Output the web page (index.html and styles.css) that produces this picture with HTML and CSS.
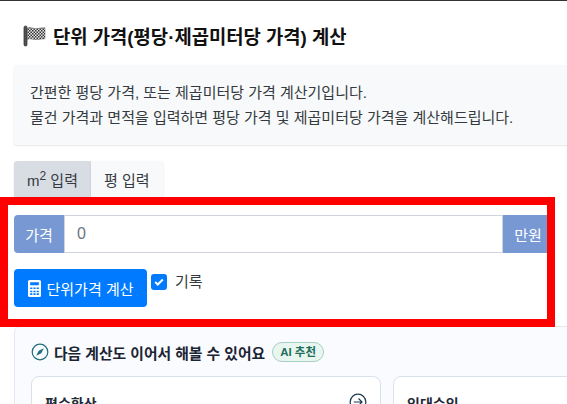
FILE: index.html
```html
<!DOCTYPE html>
<html lang="ko">
<head>
  <meta charset="UTF-8" />
  <title>단위 가격 계산</title>
  <link rel="stylesheet" href="styles.css">
</head>
<body>
  <div class="page">
    <h1 class="title">
      <svg class="flag" width="23" height="24" viewBox="0 0 23 24">
        <defs>
          <pattern id="check" width="3" height="3" patternUnits="userSpaceOnUse">
            <rect width="3" height="3" fill="#e8e8e8"/>
            <rect width="1.5" height="1.5" fill="#333"/>
            <rect x="1.5" y="1.5" width="1.5" height="1.5" fill="#333"/>
          </pattern>
        </defs>
        <rect x="1" y="2" width="3" height="20" rx="1.5" fill="#555" stroke="#222" stroke-width=".7"/>
        <path d="M4 4c4-1.500 6 .8 9 .6 3-.2 5-.8 9-.8v11c-4 .2-6 .8-9 .8-3 .2-5-1.600-9-.2z" fill="url(#check)" stroke="#444" stroke-width=".4"/>
      </svg>
      단위 가격(평당·제곱미터당 가격) 계산
    </h1>

    <div class="info">
      간편한 평당 가격, 또는 제곱미터당 가격 계산기입니다.<br>
      물건 가격과 면적을 입력하면 평당 가격 및 제곱미터당 가격을 계산해드립니다.
    </div>

    <div class="tabs">
      <button class="tab active">m<sup>2</sup> 입력</button>
      <button class="tab">평 입력</button>
    </div>

    <form class="calc">
      <div class="input-group">
        <span class="addon">가격</span>
        <input class="price" type="text" value="0" />
        <span class="addon">만원</span>
      </div>
      <div class="actions">
        <button type="button" class="submit-btn">
          <svg width="13" height="17" viewBox="0 0 12 16" preserveAspectRatio="none">
            <path fill="#fff" fill-rule="evenodd" d="M1.500 0h9A1.500 1.500 0 0 1 12 1.500v13a1.500 1.500 0 0 1-1.500 1.500h-9A1.500 1.500 0 0 1 0 14.500v-13A1.500 1.500 0 0 1 1.500 0zM2 2v3h8V2zM2 7v1.500h2V7zm3 0v1.500h2V7zm3 0v1.500h2V7zM2 10v1.500h2V10zm3 0v1.500h2V10zm3 0v1.500h2V10zM2 12.500V14h2v-1.500zm3 0V14h2v-1.500zm3 0V14h2v-1.500z"/>
          </svg>
          단위가격 계산
        </button>
        <span class="check">
          <svg width="10" height="8" viewBox="0 0 10 8">
            <path d="M1.200 4l2.600 2.500L8.800 1.500" fill="none" stroke="#fff" stroke-width="2"/>
          </svg>
        </span>
        <span class="check-label">기록</span>
      </div>
    </form>

    <section class="next">
      <h2 class="next-title">
        <svg width="18" height="18" viewBox="0 0 18 18">
          <circle cx="9" cy="9" r="7.800" fill="none" stroke="#1f6f78" stroke-width="1.200"/>
          <path d="M12.800 5.200L10.300 10.300 5.200 12.800 7.700 7.700z" fill="#1f6f78"/>
        </svg>
        다음 계산도 이어서 해볼 수 있어요
        <span class="badge">AI 추천</span>
      </h2>
      <div class="cards">
        <div class="card">
          <span class="card-name">평수환산</span>
          <svg class="arrow" width="18" height="18" viewBox="0 0 18 18">
            <circle cx="9" cy="9" r="7.800" fill="none" stroke="#1f3a4d" stroke-width="1.200"/>
            <path d="M4.800 9h8M9.500 5.500L13 9l-3.500 3.500" fill="none" stroke="#1f3a4d" stroke-width="1.200"/>
          </svg>
        </div>
        <div class="card">
          <span class="card-name">임대수익</span>
        </div>
      </div>
    </section>

    <div class="highlight"></div>
  </div>
</body>
</html>
```

FILE: styles.css
```css
html, body {
  margin: 0;
  height: 100%;
  overflow: hidden;
}

body {
  font-family: "Liberation Sans", "Noto Sans CJK KR", sans-serif;
  background: #fff;
  color: #212529;
}

.page {
  position: relative;
  width: 620px;
  box-sizing: border-box;
  padding: 0 14px;
  border-top: 1px solid #333;
}

.title {
  display: flex;
  align-items: center;
  gap: 7px;
  margin: 0;
  padding-top: 25px;
  height: 44px;
  box-sizing: border-box;
  padding-left: 9px;
  font-size: 18.8px;
  font-weight: 700;
  color: #111;
}

.info {
  margin-top: 20px;
  height: 80px;
  box-sizing: border-box;
  padding: 15px 16px;
  background: #f8f9fa;
  border-radius: 4px;
  box-shadow: 0 1px 2px rgba(0, 0, 0, .1);
  font-size: 15px;
  line-height: 25px;
  color: #343a40;
}

.tabs {
  display: flex;
  margin-top: 16px;
  height: 36px;
}

.tab {
  padding: 0 13px;
  border: none;
  background: #f8f9fa;
  font: inherit;
  font-size: 15px;
  color: #343a40;
  box-shadow: 0 1px 2px rgba(0, 0, 0, .12);
}

.tab.active {
  background: #d8dde4;
  border-radius: 3px 0 0 0;
}

.tab sup {
  font-size: 12px;
  line-height: 0;
}

.calc {
  padding-top: 18px;
  height: 129px;
  box-sizing: border-box;
}

.input-group {
  display: flex;
  width: 539px;
  height: 38px;
}

.addon {
  width: 50px;
  flex: none;
  display: flex;
  align-items: center;
  justify-content: center;
  background: #7898d4;
  color: #fff;
  font-size: 15px;
}

.input-group .addon:first-child {
  border-radius: 4px 0 0 4px;
}

.price {
  flex: 1;
  min-width: 0;
  box-sizing: border-box;
  padding: 0 12px;
  border: 1px solid #ced4da;
  font: inherit;
  font-size: 16px;
  color: #6c757d;
}

.actions {
  display: flex;
  align-items: flex-start;
  margin-top: 16px;
}

.submit-btn {
  display: flex;
  align-items: center;
  justify-content: center;
  gap: 6px;
  width: 133px;
  height: 38px;
  padding: 0;
  border: none;
  border-radius: 4px;
  background: #007bff;
  color: #fff;
  font: inherit;
  font-size: 15px;
}

.check {
  display: flex;
  align-items: center;
  justify-content: center;
  width: 16px;
  height: 16px;
  margin: 5px 0 0 4px;
  border-radius: 3px;
  background: #007bff;
}

.check-label {
  margin: 1px 0 0 8px;
  font-size: 15px;
  color: #343a40;
}

.next {
  height: 120px;
  box-sizing: border-box;
  padding: 15px 16px;
  background: #fafbff;
  border: 1px solid #e4e8f0;
  border-radius: 6px;
}

.next-title {
  display: flex;
  align-items: center;
  gap: 5px;
  margin: 0;
  height: 20px;
  font-size: 14.8px;
  font-weight: 700;
  color: #1a2433;
}

.badge {
  margin-left: 2px;
  padding: 0 7px;
  height: 20px;
  line-height: 18px;
  box-sizing: border-box;
  border: 1px solid #a5cfc0;
  border-radius: 10px;
  background: #e9f6f0;
  color: #1f6f5c;
  font-size: 11.5px;
}

.cards {
  display: flex;
  gap: 12px;
  margin-top: 14px;
}

.card {
  display: flex;
  justify-content: space-between;
  flex: none;
  width: 350px;
  height: 80px;
  box-sizing: border-box;
  padding: 16px 13px;
  background: #fff;
  border: 1px solid #d9e1ec;
  border-radius: 8px;
}

.card-name {
  font-size: 14px;
  font-weight: 700;
  color: #1f2937;
}

.highlight {
  position: absolute;
  left: 0;
  top: 196px;
  width: 555px;
  height: 130px;
  box-sizing: border-box;
  border: 8px solid #f00;
  pointer-events: none;
}
```
